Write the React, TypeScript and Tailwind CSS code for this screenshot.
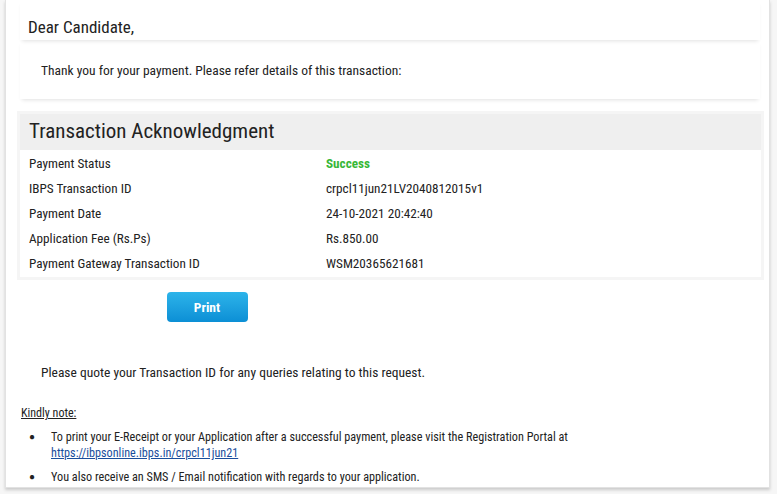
import React from "react";

const rows: [string, string, boolean?][] = [
  ["Payment Status", "Success", true],
  ["IBPS Transaction ID", "crpcl11jun21LV2040812015v1"],
  ["Payment Date", "24-10-2021 20:42:40"],
  ["Application Fee (Rs.Ps)", "Rs.850.00"],
  ["Payment Gateway Transaction ID", "WSM20365621681"],
];

export default function App() {
  return (
    <div
      className="w-[777px] h-[494px] bg-[#f6f6f6] overflow-hidden text-[#222]"
      style={{ fontFamily: '"Liberation Sans Narrow", "Roboto Condensed", "Liberation Sans", sans-serif' }}
    >
      <div className="ml-[5px] w-[765px] h-[488px] bg-white border-l border-r border-b border-[#e2e2e2] shadow-[0_2px_3px_rgba(0,0,0,0.18)] pl-[14px] pr-[9px] flex flex-col">
        <div className="h-[40px] pt-[16px] pl-[8px] shadow-[0_3px_4px_-2px_rgba(0,0,0,0.12)]">
          <div className="text-[17px] leading-[22px]">Dear Candidate,</div>
        </div>
        <div className="h-[59px] pl-[21px] pt-[21px] shadow-[0_3px_4px_-2px_rgba(0,0,0,0.12)]">
          <div className="text-[13.5px] leading-[18px]">Thank you for your payment. Please refer details of this transaction:</div>
        </div>
        <div className="mt-[12px] bg-[#f5f5f5] p-[3px] -ml-[3px] w-[747px]">
          <div className="bg-[#efefef] h-[36px] pl-[9px] flex items-center text-[21px]">Transaction Acknowledgment</div>
          <div className="bg-white py-[1px]">
            {rows.map(([k, v, ok]) => (
              <div key={k} className="flex h-[25px] items-center text-[13.2px]">
                <div className="w-[306px] pl-[9px]">{k}</div>
                <div className={ok ? "text-[#38b738] font-bold" : ""}>{v}</div>
              </div>
            ))}
          </div>
        </div>
        <div className="w-[374px] flex justify-center mt-[12px]">
          <button className="w-[81px] h-[30px] rounded-[4px] bg-gradient-to-b from-[#2cb4ea] to-[#0b8fd5] text-white font-bold text-[13.5px]">
            Print
          </button>
        </div>
        <div className="mt-[41px] pl-[21px] text-[13.5px] leading-[18px]">
          Please quote your Transaction ID for any queries relating to this request.
        </div>
        <div className="mt-[24px] pl-[1px] text-[12px] leading-[16px] underline">Kindly note:</div>
        <ul className="mt-[8px] text-[12.2px] leading-[16px]">
          <li className="flex">
            <span className="w-[31px] pl-[9px] text-[10px]">●</span>
            <div>
              <div>To print your E-Receipt or your Application after a successful payment, please visit the Registration Portal at</div>
              <a className="text-[#1a4e9c] underline" href="#">https://ibpsonline.ibps.in/crpcl11jun21</a>
            </div>
          </li>
          <li className="flex mt-[8px]">
            <span className="w-[31px] pl-[9px] text-[10px]">●</span>
            <div>You also receive an SMS / Email notification with regards to your application.</div>
          </li>
        </ul>
      </div>
    </div>
  );
}
